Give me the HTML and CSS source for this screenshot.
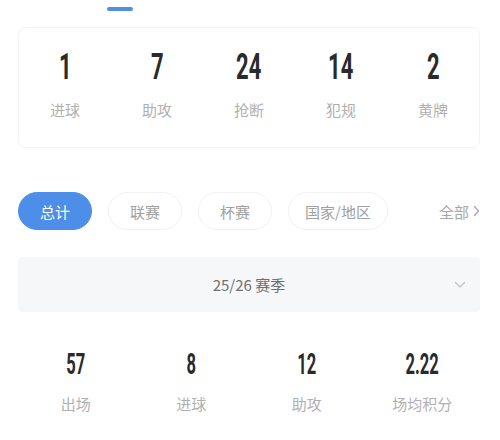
FILE: index.html
```html
<!DOCTYPE html>
<html lang="zh-CN">
<head>
<meta charset="utf-8">
<title>球员数据</title>
<link rel="stylesheet" href="styles.css">
</head>
<body>
<div class="page">
  <div class="indicator"></div>

  <div class="card">
    <div class="stat"><span class="num big">1</span><span class="label">进球</span></div>
    <div class="stat"><span class="num big">7</span><span class="label">助攻</span></div>
    <div class="stat"><span class="num big">24</span><span class="label">抢断</span></div>
    <div class="stat"><span class="num big">14</span><span class="label">犯规</span></div>
    <div class="stat"><span class="num big">2</span><span class="label">黄牌</span></div>
  </div>

  <div class="tabs">
    <span class="pill active">总计</span>
    <span class="pill">联赛</span>
    <span class="pill">杯赛</span>
    <span class="pill wide">国家/地区</span>
    <span class="all">全部<svg class="arrow" width="7" height="12" viewBox="0 0 7 12"><path d="M1.5 1.5 L5.5 6 L1.5 10.5" fill="none" stroke="#aaa" stroke-width="1.4" stroke-linecap="round" stroke-linejoin="round"/></svg></span>
  </div>

  <div class="season">
    <span class="season-text">25/26 赛季</span>
    <svg class="chev" width="12" height="8" viewBox="0 0 12 8"><path d="M1.5 1.5 L6 6 L10.5 1.5" fill="none" stroke="#c4c4c4" stroke-width="1.4" stroke-linecap="round" stroke-linejoin="round"/></svg>
  </div>

  <div class="summary">
    <div class="stat"><span class="num small">57</span><span class="label">出场</span></div>
    <div class="stat"><span class="num small">8</span><span class="label">进球</span></div>
    <div class="stat"><span class="num small">12</span><span class="label">助攻</span></div>
    <div class="stat"><span class="num small">2.22</span><span class="label">场均积分</span></div>
  </div>
</div>
</body>
</html>
```

FILE: styles.css
```css
* { box-sizing: border-box; }
html, body {
  margin: 0;
  padding: 0;
  background: #ffffff;
  width: 500px;
  height: 440px;
  overflow: hidden;
}
body {
  font-family: "Noto Sans CJK SC", "Noto Sans", sans-serif;
  color: #222;
}
.page {
  padding: 7px 20px 0 18px;
  display: flex;
  flex-direction: column;
}
.indicator {
  margin-left: 89px;
  width: 26px;
  height: 4px;
  border-radius: 2px;
  background: #4d8fe6;
}
.card {
  margin-top: 16px;
  height: 121px;
  border: 1px solid #f3f3f3;
  border-radius: 8px;
  box-shadow: 0 1px 4px rgba(0, 0, 0, 0.025);
  display: grid;
  grid-template-columns: repeat(5, 1fr);
  padding-top: 21px;
}
.stat {
  display: flex;
  flex-direction: column;
  align-items: center;
}
.num {
  display: inline-block;
  font-family: Roboto, "Liberation Sans", sans-serif;
  font-weight: 700;
  color: #2a2a2a;
  transform-origin: center;
}
.num.big {
  font-size: 36px;
  line-height: 36px;
  transform: scaleX(0.61);
}
.num.small {
  font-size: 29px;
  line-height: 28px;
  transform: scaleX(0.57);
}
.label {
  font-size: 15px;
  line-height: 20px;
  color: #b0b0b0;
}
.card .label { margin-top: 15px; }
.summary .label { margin-top: 16px; }

.tabs {
  margin-top: 44px;
  height: 38px;
  display: flex;
  align-items: center;
  gap: 16px;
}
.pill {
  min-width: 74px;
  height: 38px;
  padding: 0 15px;
  border-radius: 19px;
  border: 1px solid #f2f2f2;
  display: flex;
  align-items: center;
  justify-content: center;
  font-size: 15px;
  color: #a0a0a0;
}
.pill.wide { padding: 0 16px; }
.pill.active {
  background: #4d8fe8;
  border-color: #4d8fe8;
  color: #ffffff;
}
.all {
  margin-left: auto;
  display: flex;
  align-items: center;
  gap: 4px;
  font-size: 15px;
  color: #a6a6a6;
}
.season {
  margin-top: 27px;
  height: 55px;
  background: #f6f7f9;
  border-radius: 4px;
  display: flex;
  align-items: center;
  justify-content: center;
  position: relative;
}
.season-text {
  font-size: 15px;
  color: #707070;
}
.chev {
  position: absolute;
  right: 14px;
  top: 24px;
}
.summary {
  margin-top: 38px;
  display: grid;
  grid-template-columns: repeat(4, 1fr);
}
```
